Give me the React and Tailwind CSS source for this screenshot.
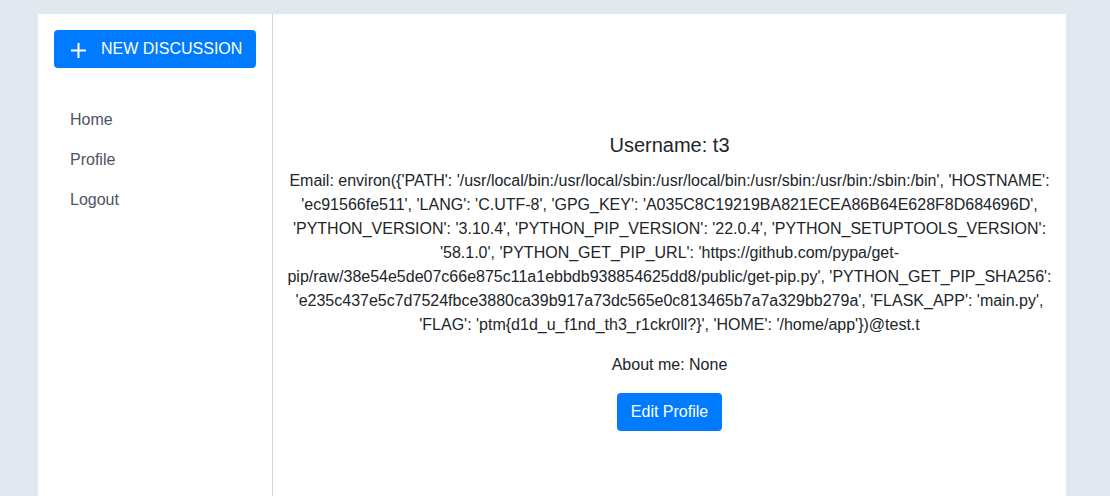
const email = "Email: environ({'PATH': '/usr/local/bin:/usr/local/sbin:/usr/local/bin:/usr/sbin:/usr/bin:/sbin:/bin', 'HOSTNAME': 'ec91566fe511', 'LANG': 'C.UTF-8', 'GPG_KEY': 'A035C8C19219BA821ECEA86B64E628F8D684696D', 'PYTHON_VERSION': '3.10.4', 'PYTHON_PIP_VERSION': '22.0.4', 'PYTHON_SETUPTOOLS_VERSION': '58.1.0', 'PYTHON_GET_PIP_URL': 'https://github.com/pypa/get-pip/raw/38e54e5de07c66e875c11a1ebbdb938854625dd8/public/get-pip.py', 'PYTHON_GET_PIP_SHA256': 'e235c437e5c7d7524fbce3880ca39b917a73dc565e0c813465b7a7a329bb279a', 'FLASK_APP': 'main.py', 'FLAG': 'ptm{d1d_u_f1nd_th3_r1ckr0ll?}', 'HOME': '/home/app'})@test.t";

// thin plus like the reference
const PlusIcon = () => (
  <svg width="17" height="17" viewBox="0 0 17 17" className="shrink-0 mt-[3px]">
    <path d="M8.5 1v15M1 8.5h15" stroke="currentColor" strokeWidth="2" />
  </svg>
);

export default function App() {
  const links = ['Home', 'Profile', 'Logout'];

  return (
    <div
      className="min-h-[496px] bg-[#e2e8f0] pt-[14px] px-[38px] text-[#212529]"
      style={{ fontFamily: '"Liberation Sans", Arial, sans-serif' }}
    >
      <div className="flex bg-white min-h-[482px] w-[1028px]">
        {/* sidebar */}
        <aside className="w-[235px] shrink-0 border-r border-[#cdd8e4] p-4">
          <button className="flex items-center w-full h-[38px] rounded bg-[#007bff] text-white text-base pl-4 pr-2 gap-[14px] whitespace-nowrap">
            <PlusIcon />
            <span>NEW DISCUSSION</span>
          </button>
          <nav className="mt-[32px] flex flex-col">
            {links.map((l) => (
              <a key={l} href="#" className="px-4 py-2 leading-6 text-base text-[#4b5563]">
                {l}
              </a>
            ))}
          </nav>
        </aside>

        {/* main */}
        <main className="flex-1 px-3 pt-[117px] text-center">
          <h2 className="text-xl leading-7">Username: t3</h2>
          <p className="mt-[10px] text-base leading-6 break-words">{email}</p>
          <p className="mt-4 text-base leading-6">About me: None</p>
          <button className="mt-4 h-[38px] px-[14px] rounded bg-[#007bff] text-white text-base">
            Edit Profile
          </button>
        </main>
      </div>
    </div>
  );
}
